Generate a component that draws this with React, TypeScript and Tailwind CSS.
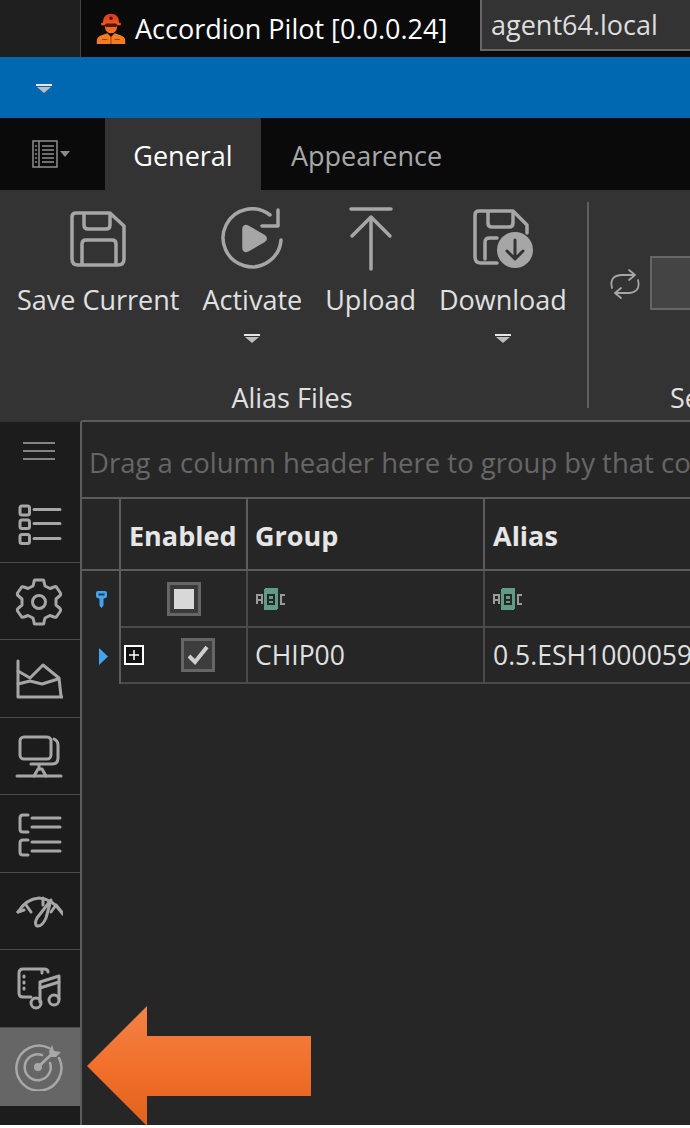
import React from "react";

const ic = { fill: "none", stroke: "#a6a6a6", strokeLinecap: "round" as const, strokeLinejoin: "round" as const };

function Caret({ className = "" }: { className?: string }) {
  return (
    <svg width="16" height="10" viewBox="0 0 16 10" className={className}>
      <rect x="0" y="0" width="16" height="2" fill="#e6e6e6" />
      <path d="M1 3H15L8 9Z" fill="#bdbdbd" />
    </svg>
  );
}

function SaveIcon() {
  return (
    <svg width="56" height="56" viewBox="0 0 56 56" {...ic} strokeWidth="3.5">
      <path d="M6 2H40L54 15V48Q54 54 48 54H8Q2 54 2 48V6Q2 2 6 2Z" />
      <path d="M14 3V14Q14 18 18 18H36Q40 18 40 14V3" />
      <path d="M12 53V33Q12 29 16 29H42Q46 29 46 33V53" />
    </svg>
  );
}

function ActivateIcon() {
  return (
    <svg width="64" height="64" viewBox="0 0 64 64" {...ic} strokeWidth="3.5">
      <path d="M61 33A29 29 0 1 1 50 8" />
      <path d="M58 3V19H42" />
      <path d="M24 22Q24 18.500 27.500 20L44 29.500Q46.500 31.500 44 33.500L27.500 43Q24 44.500 24 41Z" fill="#a6a6a6" />
    </svg>
  );
}

function UploadIcon() {
  return (
    <svg width="44" height="64" viewBox="0 0 44 64" {...ic} strokeWidth="3.5">
      <path d="M2 2H42" />
      <path d="M22 62V11" />
      <path d="M3 29L22 10L41 29" />
    </svg>
  );
}

function DownloadIcon() {
  return (
    <svg width="60" height="60" viewBox="0 0 60 60" {...ic} strokeWidth="3.5">
      <path d="M24 54H8Q2 54 2 48V6Q2 2 6 2H40L54 16V24" />
      <path d="M15 3V14Q15 18 19 18H36Q40 18 40 14V3" />
      <path d="M24 29H17Q12 29 12 33V50" />
      <circle cx="42" cy="41" r="18" fill="#a6a6a6" stroke="none" />
      <path d="M42 31V50M34 42L42 50L50 42" stroke="#333333" strokeWidth="3" />
    </svg>
  );
}

function SidebarIcon({ i }: { i: number }) {
  const p = { width: 48, height: 48, viewBox: "0 0 48 48", ...ic, strokeWidth: 3 };
  switch (i) {
    case 0:
      return (
        <svg width="32" height="20" viewBox="0 0 32 20" stroke="#a6a6a6" strokeWidth="1.500">
          <path d="M0 2H32M0 10H32M0 18H32" />
        </svg>
      );
    case 1:
      return (
        <svg {...p}>
          <rect x="5" y="5" width="9.500" height="9" rx="2" />
          <rect x="5" y="19" width="9.500" height="8.500" rx="2" />
          <rect x="5" y="33.500" width="9.500" height="9" rx="2" />
          <path d="M19 8.500H45M19 22.500H45M19 37.500H45" />
        </svg>
      );
    case 2:
      return (
        <svg {...p}>
          <path d="M20 2H28Q29 2 29 4L30 8L35 10.500L39 9Q41 8 42 10L45.500 15Q46 17 44.500 18L41 21V27L44.500 30Q46 31 45.500 33L42 38Q41 40 39 39L35 37.500L30 40L29 44Q29 46 28 46H20Q19 46 19 44L18 40L13 37.500L9 39Q7 40 6 38L2.500 33Q2 31 3.500 30L7 27V21L3.500 18Q2 17 2.500 15L6 10Q7 8 9 9L13 10.500L18 8L19 4Q19 2 20 2Z" />
          <circle cx="24" cy="24" r="6.500" />
        </svg>
      );
    case 3:
      return (
        <svg {...p}>
          <path d="M3 5V41H47" />
          <path d="M3 15L15 22L28 9L44 22L46 40" />
          <path d="M3 28L15 25L27 28L43 23" />
        </svg>
      );
    case 4:
      return (
        <svg {...p}>
          <rect x="5" y="4" width="31" height="22" rx="4" />
          <path d="M39 6Q43 8 43 12V25Q43 31 37 31H16" />
          <path d="M24 32V36" />
          <path d="M19 43L23 36H27L31 43H19Z" />
          <path d="M2 43H19M31 43H46" />
        </svg>
      );
    case 5:
      return (
        <svg {...p}>
          <path d="M13 4H8Q5 4 5 7V18Q5 21 8 21H13" />
          <path d="M13 29H8Q5 29 5 32V41Q5 44 8 44H13" />
          <path d="M17 7H45M17 16H45M17 31H45M17 40H45" />
        </svg>
      );
    case 6:
      return (
        <svg {...p}>
          <path d="M3 24Q11 11 24 10Q38 11 48 26" />
          <path d="M11 17L16 24M3 24L9 22M28 10V17M48 26L41 17L36 24" />
          <path d="M36 12L31 30Q27 39 22 38Q19 36 22 30Z" />
        </svg>
      );
    case 7:
      return (
        <svg {...p}>
          <path d="M16 31H8Q4 31 4 27V7Q4 3 8 3H29Q33 3 33 6" />
          <path d="M9 10V11M9 16V17M9 22V23M27 4V7" />
          <path d="M25 36V16L44 10V33" />
          <path d="M25 22L44 16" />
          <circle cx="21" cy="37" r="5" />
          <circle cx="39" cy="34" r="5" />
        </svg>
      );
    default:
      return (
        <svg {...p} stroke="#a8a8a8">
          <path d="M34 5A22.500 22.500 0 1 0 44 15" strokeWidth="2.500" />
          <path d="M27 12A13 13 0 1 0 35 20" strokeWidth="2.500" />
          <circle cx="23" cy="24" r="4" fill="#a8a8a8" stroke="none" />
          <path d="M23 24L38 10" />
          <path d="M37 2L39 8L46 9L41 14L35 14L34 8Z" fill="#a8a8a8" stroke="none" />
        </svg>
      );
  }
}

function Abc() {
  return (
    <svg width="30" height="22" viewBox="0 0 30 22" shapeRendering="crispEdges">
      <rect x="8" y="0" width="14" height="22" rx="2" fill="#5e9c86" />
      <path d="M1 16V7H5.500V16M1 11.500H5.500" fill="none" stroke="#9a9a9a" strokeWidth="2" />
      <path d="M12 7H17.500V15.500H12ZM12 11.500H17.500" fill="none" stroke="#262626" strokeWidth="2" />
      <path d="M29 7H25V15.500H29" fill="none" stroke="#9a9a9a" strokeWidth="2" />
    </svg>
  );
}

function RibbonButton({ label, caret, icon }: { label: string; caret?: boolean; icon: React.ReactNode }) {
  return (
    <div className="flex flex-col items-center">
      <div className="flex h-[66px] items-center justify-center">{icon}</div>
      <div className="mt-[10px] h-[36px] text-[27px] leading-[36px] whitespace-nowrap text-[#e0e0e0]">{label}</div>
      {caret && <Caret className="mt-[16px]" />}
    </div>
  );
}

export default function App() {
  return (
    <div className="relative flex h-[1125px] w-[690px] flex-col overflow-hidden bg-[#262626] font-['Open_Sans','Noto_Sans',sans-serif]">
      {/* Title bar */}
      <div className="flex h-[57px] shrink-0 bg-[#0a0a0a]">
        <div className="h-full w-[81px] shrink-0 border-r border-[#444444] bg-[#1f1f1f]" />
        <div className="flex w-[399px] shrink-0 items-center pl-[14px]">
          <svg width="32" height="32" viewBox="0 0 36 36" className="mr-[8px] mb-[2px] shrink-0">
            <defs>
              <linearGradient id="worker" x1="0" y1="0" x2="0" y2="1">
                <stop offset="0" stopColor="#d9381e" />
                <stop offset="1" stopColor="#f47b20" />
              </linearGradient>
            </defs>
            <path d="M9 12Q9 2 18 2Q27 2 27 12H29V15H25Q25 24 18 24Q11 24 11 15H7V12Z" fill="url(#worker)" />
            <rect x="11" y="13" width="14" height="4" rx="2" fill="#5a1608" />
            <circle cx="18" cy="7" r="2" fill="#5a1608" />
            <path d="M2 36V32Q2 28 8 26L14 24L18 28L22 24L28 26Q34 28 34 32V36Z" fill="#f47b20" />
            <path d="M18 28V36M8 31H14M22 31H28" stroke="#8a3a10" strokeWidth="1" />
          </svg>
          <span className="text-[27px] leading-none whitespace-nowrap text-white">Accordion Pilot [0.0.0.24]</span>
        </div>
        <div className="flex h-[51px] flex-1 items-center border-b-2 border-l-2 border-[#666666] bg-[#333333] pl-[9px]">
          <span className="text-[27px] leading-none whitespace-nowrap text-[#dddddd]">agent64.local</span>
        </div>
      </div>

      {/* Blue strip */}
      <div className="flex h-[61px] shrink-0 items-center bg-[#0067b1] pt-[2px] pl-[36px]">
        <Caret />
      </div>

      {/* Tabs */}
      <div className="flex h-[72px] shrink-0 bg-[#0a0a0a]">
        <div className="flex w-[105px] shrink-0 items-center pl-[32px]">
          <svg width="26" height="28" viewBox="0 0 26 28" fill="none" stroke="#8f8f8f" strokeWidth="1.500">
            <rect x="1" y="1" width="24" height="26" />
            <path d="M7 1V27" />
            <path d="M10 6H22M10 10H22M10 14H22M10 18H22M10 22H22" />
            <path d="M3 6H5M3 10H5M3 14H5M3 18H5M3 22H5" />
          </svg>
          <svg width="10" height="6" viewBox="0 0 10 6" className="ml-[2px]">
            <path d="M0 0H10L5 6Z" fill="#8a8a8a" />
          </svg>
        </div>
        <div className="flex w-[156px] shrink-0 items-center justify-center bg-[#333333] pt-[3px] text-[27px] leading-none text-white">General</div>
        <div className="flex items-center pt-[3px] pl-[30px] text-[27px] leading-none text-[#a8a8a8]">Appearence</div>
      </div>

      {/* Ribbon */}
      <div className="flex h-[230px] shrink-0 overflow-hidden bg-[#333333]">
        <div className="flex w-[587px] shrink-0 flex-col pl-[17px]">
          <div className="flex h-[194px] gap-[23px] pt-[16px]">
            <RibbonButton label="Save Current" icon={<SaveIcon />} />
            <RibbonButton label="Activate" caret icon={<ActivateIcon />} />
            <RibbonButton label="Upload" icon={<UploadIcon />} />
            <RibbonButton label="Download" caret icon={<DownloadIcon />} />
          </div>
          <div className="pr-[20px] text-center text-[27px] leading-[28px] text-[#e0e0e0]">Alias Files</div>
        </div>
        <div className="my-[12px] w-[2px] shrink-0 bg-[#5f5f5f]" />
        <div className="flex flex-1 flex-col overflow-hidden">
          <div className="flex h-[194px] items-start pt-[66px] pl-[20px]">
            <svg width="32" height="32" viewBox="0 0 32 32" fill="none" stroke="#a6a6a6" strokeWidth="1.800" strokeLinecap="round" strokeLinejoin="round" className="mt-[12px] shrink-0">
              <path d="M3 20Q0 8 12 7H26M20 2L26 7L20 12" />
              <path d="M29 12Q32 24 20 25H6M12 20L6 25L12 30" />
            </svg>
            <div className="ml-[9px] h-[54px] w-[60px] shrink-0 border-2 border-[#666666] bg-[#444444]" />
          </div>
          <div className="pl-[81px] text-[27px] leading-[28px] text-[#e0e0e0]">Se</div>
        </div>
      </div>

      {/* Body */}
      <div className="flex min-h-0 flex-1">
        {/* Sidebar */}
        <div className="flex w-[82px] shrink-0 flex-col border-t-2 border-r-2 border-[#5c5c5c] border-t-[#333333] bg-[#1c1c1c]">
          <div className="flex h-[63px] shrink-0 items-center justify-center pr-[3px] pb-[6px]">
            <SidebarIcon i={0} />
          </div>
          {[1, 2, 3, 4, 5, 6, 7].map((i) => (
            <div key={i} className="flex h-[77.500px] shrink-0 items-center justify-center border-b border-[#4a4a4a] pt-[3px] pr-[3px]">
              <SidebarIcon i={i} />
            </div>
          ))}
          <div className="flex h-[78px] shrink-0 items-center justify-center bg-[#666666] pr-[2px]">
            <SidebarIcon i={8} />
          </div>
        </div>

        {/* Grid */}
        <div className="flex min-w-0 flex-1 flex-col overflow-hidden border-t-2 border-[#5c5c5c]">
          <div className="flex h-[77px] shrink-0 items-center border-b-2 border-[#5c5c5c] pt-[6px] pl-[7px] text-[27.500px] leading-none whitespace-nowrap text-[#666666]">
            Drag a column header here to group by that column
          </div>
          <div className="flex h-[72px] shrink-0 border-b-2 border-[#5c5c5c] text-[27px] font-bold text-[#e6e6e6]">
            <div className="w-[39px] shrink-0 border-r-2 border-[#5c5c5c]" />
            <div className="flex w-[127px] shrink-0 items-center border-r-2 border-[#5c5c5c] pt-[5px] pl-[8px]">Enabled</div>
            <div className="flex w-[237px] shrink-0 items-center border-r-2 border-[#5c5c5c] pt-[5px] pl-[7px]">Group</div>
            <div className="flex flex-1 items-center pt-[5px] pl-[8px]">Alias</div>
          </div>
          <div className="flex h-[57px] shrink-0">
            <div className="flex w-[39px] shrink-0 items-center justify-center border-r-2 border-[#5c5c5c] pl-[2px]">
              <svg width="13" height="17" viewBox="0 0 13 17">
                <path d="M1 2Q1 0 3 0H10Q12 0 12 2V5Q12 7 8.500 7.500V14.500L6.500 17L4.500 14.500V7.500Q1 7 1 5Z" fill="#41a5ee" />
                <rect x="3.500" y="2.500" width="6" height="2" fill="#1e3a55" />
              </svg>
            </div>
            <div className="flex w-[127px] shrink-0 items-center justify-center border-r-2 border-b-2 border-[#4a4a4a]">
              <div className="flex h-[34px] w-[34px] items-center justify-center border-[3px] border-[#666666] bg-[#3a3a3a]">
                <div className="h-[20px] w-[20px] bg-[#d8d8d8]" />
              </div>
            </div>
            <div className="flex w-[237px] shrink-0 items-center border-r-2 border-b-2 border-[#4a4a4a] pl-[8px]">
              <Abc />
            </div>
            <div className="flex flex-1 items-center border-b-2 border-[#4a4a4a] pl-[8px]">
              <Abc />
            </div>
          </div>
          <div className="flex h-[56px] shrink-0 text-[26.500px] text-[#e0e0e0]">
            <div className="flex w-[39px] shrink-0 items-center justify-center border-r-2 border-[#5c5c5c] pl-[5px]">
              <svg width="9" height="17" viewBox="0 0 9 17">
                <path d="M0 0L9 8.500L0 17Z" fill="#41a5ee" />
              </svg>
            </div>
            <div className="flex w-[127px] shrink-0 items-center border-r-2 border-b-2 border-[#4a4a4a] pl-[3px]">
              <div className="flex h-[20px] w-[20px] shrink-0 items-center justify-center border-2 border-white bg-[#111111]">
                <svg width="12" height="12" viewBox="0 0 12 12" stroke="#ffffff" strokeWidth="1.500">
                  <path d="M6 1V11M1 6H11" />
                </svg>
              </div>
              <div className="ml-[37px] flex h-[34px] w-[34px] shrink-0 items-center justify-center border-[3px] border-[#666666] bg-[#3d3d3d]">
                <svg width="22" height="20" viewBox="0 0 22 20" fill="none" stroke="#cfcfcf" strokeWidth="4">
                  <path d="M2 11L8 17L20 2" />
                </svg>
              </div>
            </div>
            <div className="flex w-[237px] shrink-0 items-center border-r-2 border-b-2 border-[#4a4a4a] pl-[7px] leading-none">CHIP00</div>
            <div className="flex flex-1 items-center border-b-2 border-[#4a4a4a] pl-[8px] leading-none whitespace-nowrap">0.5.ESH1000059</div>
          </div>
        </div>
      </div>

      {/* Annotation arrow */}
      <svg width="226" height="122" viewBox="0 0 226 122" className="absolute top-[1005px] left-[86px]">
        <defs>
          <linearGradient id="arrow" x1="0" y1="0" x2="0" y2="1">
            <stop offset="0" stopColor="#f08347" />
            <stop offset="0.5" stopColor="#f2702c" />
            <stop offset="1" stopColor="#e0621c" />
          </linearGradient>
        </defs>
        <path d="M1 61L61 1V31H225V91H61V121Z" fill="url(#arrow)" />
      </svg>
    </div>
  );
}
